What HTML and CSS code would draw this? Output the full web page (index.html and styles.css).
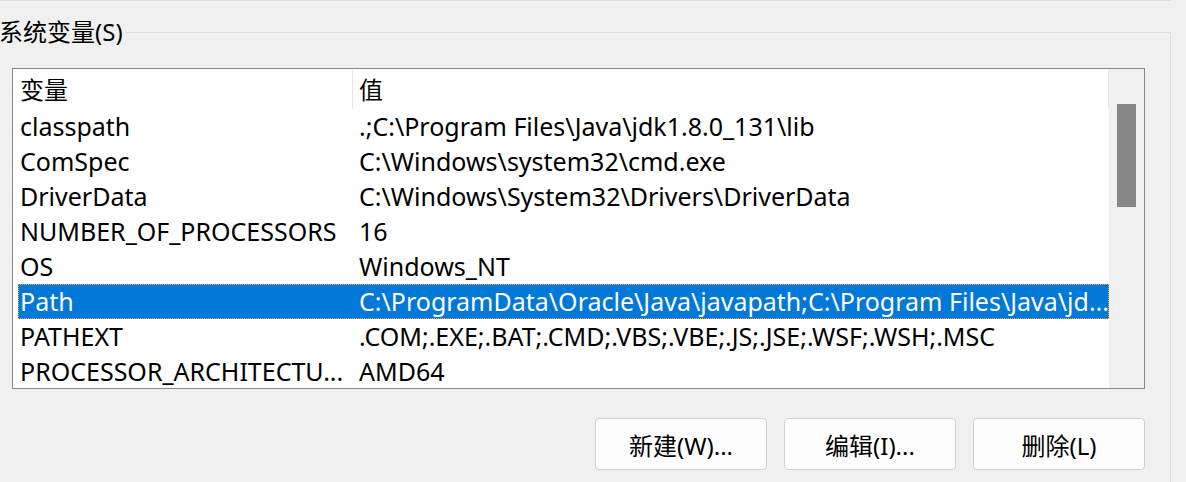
FILE: index.html
```html
<!DOCTYPE html>
<html lang="zh-CN">
<head>
<meta charset="UTF-8">
<meta name="viewport" content="width=device-width, initial-scale=1.0">
<title>环境变量</title>
<link rel="stylesheet" href="styles.css">
</head>
<body>
<div class="top-rule"></div>
<fieldset class="group">
  <legend>系统变量(S)</legend>
  <div class="listbox">
    <div class="list">
      <div class="list-head">
        <div class="head-cell name">变量</div>
        <div class="head-cell value">值</div>
      </div>
      <div class="row"><div class="cell name">classpath</div><div class="cell value">.;C:\Program Files\Java\jdk1.8.0_131\lib</div></div>
      <div class="row"><div class="cell name">ComSpec</div><div class="cell value">C:\Windows\system32\cmd.exe</div></div>
      <div class="row"><div class="cell name">DriverData</div><div class="cell value">C:\Windows\System32\Drivers\DriverData</div></div>
      <div class="row"><div class="cell name">NUMBER_OF_PROCESSORS</div><div class="cell value">16</div></div>
      <div class="row"><div class="cell name">OS</div><div class="cell value">Windows_NT</div></div>
      <div class="row selected"><div class="cell name">Path</div><div class="cell value">C:\ProgramData\Oracle\Java\javapath;C:\Program Files\Java\jd...</div></div>
      <div class="row"><div class="cell name">PATHEXT</div><div class="cell value">.COM;.EXE;.BAT;.CMD;.VBS;.VBE;.JS;.JSE;.WSF;.WSH;.MSC</div></div>
      <div class="row"><div class="cell name">PROCESSOR_ARCHITECTU...</div><div class="cell value">AMD64</div></div>
    </div>
    <div class="scrollbar"><div class="thumb"></div></div>
  </div>
  <div class="buttons">
    <button class="btn">新建(W)...</button>
    <button class="btn">编辑(I)...</button>
    <button class="btn">删除(L)</button>
  </div>
</fieldset>
</body>
</html>
```

FILE: styles.css
```css
*{box-sizing:border-box;}
:root{
  --bg:#f0f0f0;
  --rule:#dcdcdc;
  --list-border:#828790;
  --select:#0078d7;
  --thumb:#868686;
}
body{margin:0;background:var(--bg);color:#000;font-family:"Noto Sans","Noto Sans CJK SC",sans-serif;font-size:24px;overflow:hidden;}
.top-rule{width:1171px;height:1px;background:var(--rule);}
.group{margin:15px 0 0 0;padding:0 0 30px 0;width:1171px;min-width:0;min-inline-size:0;border:0;border-top:1px solid var(--rule);border-right:1px solid var(--rule);}
.group legend{padding:0 3px 0 0;margin-left:-1px;line-height:32px;}
.listbox{display:flex;height:321px;margin:20px 25px 0 12px;border:1px solid var(--list-border);background:#fff;overflow:hidden;}
.list{flex:1;min-width:0;}
.list-head{display:flex;height:40px;padding-top:1px;}
.head-cell{height:39px;line-height:39px;white-space:nowrap;}
.head-cell.name{width:340px;padding-left:7px;border-right:1px solid #e5e5e5;}
.head-cell.value{flex:1;padding-left:6px;border-right:1px solid #e5e5e5;}
.row{display:flex;height:35px;line-height:35px;margin-left:5px;white-space:nowrap;font-size:25px;}
.cell{overflow:hidden;text-overflow:ellipsis;}
.cell.name{width:335px;flex-shrink:0;padding-left:2px;}
.cell.value{flex:1;min-width:0;padding-left:6px;}
.row.selected{background:var(--select);color:#fff;outline:1px dotted #f5a623;outline-offset:-1px;}
.scrollbar{width:35px;flex-shrink:0;background:var(--bg);padding:35px 0 0 8px;}
.thumb{width:19px;height:103px;background:var(--thumb);}
.buttons{display:flex;justify-content:flex-end;gap:17px;margin:29px 25px 0 0;}
.btn{width:172px;height:52px;font:inherit;color:#000;background:#fdfdfd;border:1px solid #d0d0d0;border-radius:4px;padding:0;}
```
